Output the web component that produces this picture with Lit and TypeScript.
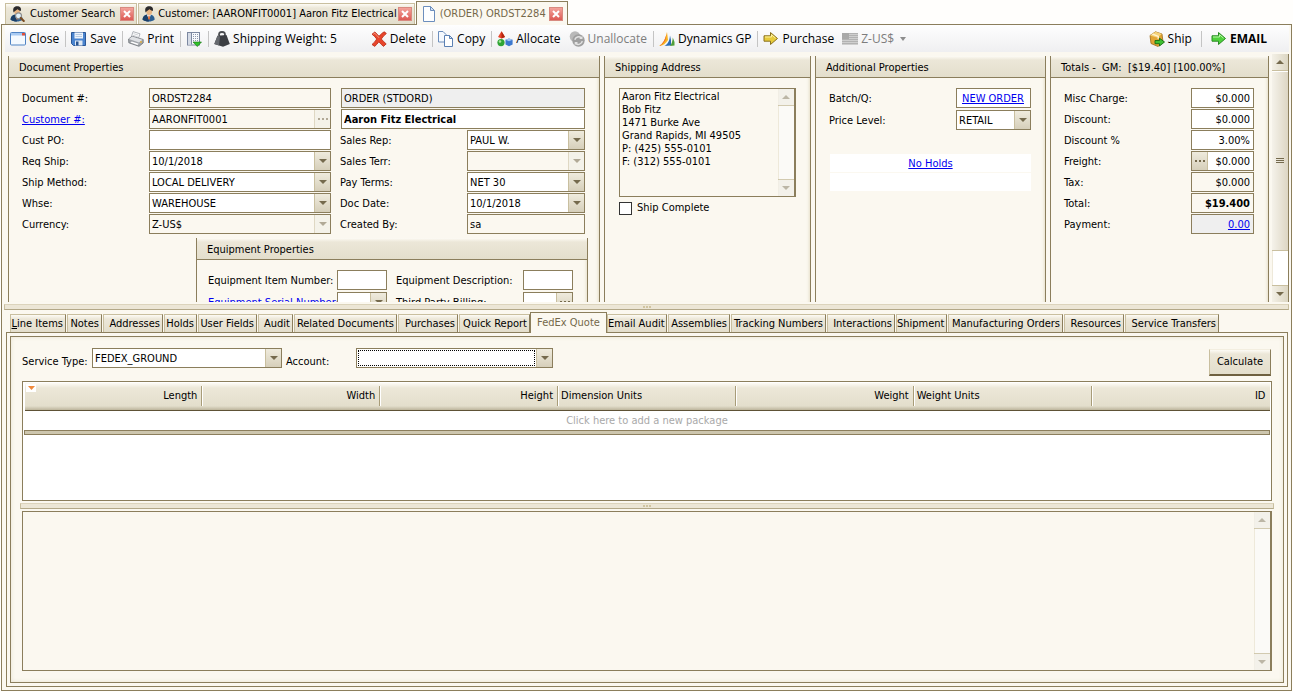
import { LitElement, html, css, svg, nothing, TemplateResult } from "lit";
import { customElement, state } from "lit/decorators.js";
import { classMap } from "lit/directives/class-map.js";
import { styleMap } from "lit/directives/style-map.js";

const icon = (body: TemplateResult) =>
  html`<svg class="icon" viewBox="0 0 16 16" width="16" height="16" aria-hidden="true">${body}</svg>`;

const person = svg`
  <path d="M1.500 13.500c.3-3 2-4.500 5-5h2.500c3 .6 4.500 2 4.700 5-3 2.800-9 2.800-12.200 0z" fill="#2c5f92"/>
  <path d="M1.500 13.500c.3-3 2-4.500 5-5l1.500 7c-2.500 0-4.800-.6-6.500-2z" fill="#1d4068"/>
  <path d="M5.800 8.600l2.200 5 2-5z" fill="#fff"/>
  <path d="M7.500 9.600h1l.6 2.800-1 1.600-1-1.600z" fill="#d9622b"/>
  <ellipse cx="8.200" cy="5" rx="3" ry="3.900" fill="#e9b583"/>
  <path d="M4.600 6.500C3.400 2.400 5 .3 8 .3c3.200 0 4.700 1.700 3.800 4.700-1.300-.2-2.400-1-3.200-1.800-1 1-2.400 1-4 3.300z" fill="#2b2a2c"/>`;

const icons: Record<string, TemplateResult> = {
  person: icon(person),
  search: icon(svg`${person}
    <circle cx="9.500" cy="9.800" r="3" fill="#e2f1fa" stroke="#8c8c8c" stroke-width="1.200"/>
    <path d="M11.800 12l3 3" stroke="#7a4c22" stroke-width="2" stroke-linecap="round"/>`),
  page: icon(svg`
    <path d="M2.500.5h7l4 4v11h-11z" fill="#fdfeff" stroke="#6c8ebd"/>
    <path d="M9.500.5v4h4z" fill="#d5e3f5" stroke="#6c8ebd" stroke-linejoin="round"/>`),
  window: icon(svg`
    <rect x=".5" y="1.500" width="15" height="12.500" rx="1" fill="#f4f9fe" stroke="#4f83c4"/>
    <rect x="1" y="2" width="14" height="2.500" fill="#a8caf2"/>
    <rect x="12" y="2" width="3" height="2.500" fill="#e0503a"/>`),
  save: icon(svg`
    <path d="M.5 1.500h14v13H2.500l-2-2z" fill="#4a84cf" stroke="#2a5797"/>
    <rect x="3.500" y="1.500" width="8.500" height="6" fill="#eef4fb"/>
    <path d="M4.500 3.500h6.500M4.500 5.500h6.500" stroke="#b7cbe4"/>
    <rect x="4" y="9.500" width="7.500" height="5" fill="#dfe8f3"/>
    <rect x="5" y="10.500" width="2.500" height="4" fill="#27528f"/>`),
  print: icon(svg`
    <path d="M3.200 6.500L5 .6l7 2.200-1.700 5z" fill="#fff" stroke="#9aa0a6" stroke-width=".8"/>
    <path d="M5.500 2.600l4.800 1.500M5 4.300l4.800 1.500" stroke="#c3c7cb" stroke-width=".8"/>
    <path d="M.6 8L4 5.200l11.200 3.300v3.500L11 15.300.8 11.800z" fill="#a0a4a9" stroke="#6f7478" stroke-width=".8"/>
    <path d="M1 8L4 5.600l10.600 3.100L11 11.400z" fill="#dfe1e4"/>
    <path d="M2.500 11.500l7 2.400 1.200-1.100-7-2.300z" fill="#fff"/>
    <circle cx="13" cy="11" r=".9" fill="#e7b23a"/>`),
  grid: icon(svg`
    <rect x="1.500" y="1.500" width="12" height="12.500" fill="#f7f9fc" stroke="#7c88a0"/>
    <rect x="2" y="2" width="3.500" height="11.500" fill="#d5dbe6"/>
    <path d="M5.500 1.500v12" stroke="#7c88a0"/>
    <path d="M7 3.500h6M7 5.500h6M7 7.500h6M7 9.500h6" stroke="#8d97ab" stroke-dasharray="1 1"/>
    <path d="M7 11h8.500l-4.200 4.500z" fill="#2fc02a" stroke="#147010" stroke-width=".6"/>`),
  weight: icon(svg`
    <path d="M5.500 5.500C4 2 6 1 8 1s4 1 2.500 4.500" fill="none" stroke="#4a4c50" stroke-width="1.800"/>
    <path d="M3.500 4.800L12.500 4l3.300 9L9 15.800.3 13z" fill="#3c3e43"/>
    <path d="M3.500 4.800l2.500.6-1 9L.3 13z" fill="#66696f"/>`),
  delete: icon(svg`
    <path d="M1 3.200L3.800 1C5.500 2.400 7 4 8 5.300 9.500 3.500 11.500 1.600 13.500.8l1.800 1.800C13.500 4 11.500 6 10.300 8c1.400 1.700 3.300 3.600 4.900 4.900L12.500 15.400c-1.600-1.200-3.200-2.900-4.600-4.600-1.300 1.700-2.800 3.500-4.200 4.600L1 13.500C3 12 4.600 10 5.700 8 4.400 6.100 2.800 4.500 1 3.200z" fill="#e8452c" stroke="#b82a14" stroke-width=".8"/>
    <path d="M2.300 3.300l1.500-1c1.800 1.500 3 3 4.200 4.500" stroke="#f59a82" fill="none"/>`),
  copy: icon(svg`
    <path d="M.5.500h4.500l3 3v7.500h-7.500z" fill="#f5f9fe" stroke="#6c8ebd"/>
    <path d="M6.500 4.500h5l3 3v8h-8z" fill="#fff" stroke="#5b80b3"/>
    <path d="M11.500 4.500v3h3z" fill="#d5e3f5" stroke="#5b80b3"/>`),
  allocate: icon(svg`
    <path d="M4.500.3L8 6 4.500 7.500 1 6z" fill="#e8452c"/><path d="M4.500.3L8 6 4.500 7.500z" fill="#b3250f"/>
    <circle cx="4" cy="11.600" r="3.600" fill="#2fa535"/><circle cx="3" cy="10.500" r="1.300" fill="#a5e39c"/>
    <path d="M8.500 8.800L12 7.500l3.600 1.300v4.700L12 15.200l-3.500-1.700z" fill="#3b78cf"/>
    <path d="M8.500 8.800L12 7.500l3.600 1.300L12 10.300z" fill="#a3c6f2"/>`),
  unallocate: icon(svg`
    <circle cx="6" cy="5.500" r="5.300" fill="#b9b9b9"/><circle cx="9.500" cy="9.500" r="6.200" fill="#9f9f9f"/>
    <path d="M5.800 8.800a4 4 0 0 1 6.500-2M13.300 10.200a4 4 0 0 1-6.500 2.200" fill="none" stroke="#e2e2e2" stroke-width="1.500"/>
    <path d="M13.500 4.800V8h-3.300zM5.700 14.200V11H9z" fill="#e2e2e2"/>`),
  dynamics: icon(svg`
    <path d="M0 15c4-2 6.500-7 8-14l1 8c-2 3.500-5 5.600-9 6z" fill="#f9b61f"/>
    <path d="M0 15c4-2 6.500-7 8-14L6.500 9C5 12 3 14 0 15z" fill="#ee6a2a"/>
    <path d="M5.500 15c3.500-2 5-5 5.500-10.500L12 9v5.500z" fill="#2b6cb5"/>
    <path d="M11 15c1.800-2 2.500-5 2.800-8.500L15.500 11v3.500z" fill="#4f9e3a"/>`),
  yellow: icon(svg`
    <path d="M1 4.800h6.500V1.500L14.500 7.500l-7 6v-3.300H1z" fill="#e7cb3a" stroke="#8a7120"/>
    <path d="M2 6h6.500V3.700l4 3.500" fill="none" stroke="#fbf0a0"/>`),
  green: icon(svg`
    <path d="M1 4.800h6.500V1.500L14.500 7.500l-7 6v-3.300H1z" fill="#4fd23c" stroke="#2a8a24"/>
    <path d="M2 6h6.500V3.700l4 3.500" fill="none" stroke="#b6f3a6"/>`),
  flag: icon(svg`
    <rect x="0" y="2" width="16" height="12" fill="#cfcfcf"/>
    <path d="M0 2.500h16M0 4.500h16M0 6.500h16M0 8.500h16M0 10.500h16M0 12.500h16" stroke="#b2b2b2"/>
    <rect x="0" y="2" width="7" height="6" fill="#a8a8a8"/>`),
  ship: icon(svg`
    <path d="M1 4.500L6.500.8 13 3l1 8-5 4.500-7-3z" fill="#e2a535" stroke="#9a6a1a" stroke-width=".8"/>
    <path d="M1 4.500L6.500.8 13 3 8 6.500z" fill="#f6d37a"/>
    <path d="M4 2.600l6 2.300v2.500l-1.500.6V5.800L2.500 3.600z" fill="#fff3cf"/>
    <path d="M6 9.500h4.500V7.200L15.500 11l-5 4v-2.300H6z" fill="#3fc032" stroke="#156b10" stroke-width=".9"/>`),
};

interface Tool { id: string; text?: string; sep?: boolean; off?: boolean; menu?: boolean; strong?: boolean }
const leftTools: Tool[] = [
  { id: "window", text: "Close", sep: true },
  { id: "save", text: "Save", sep: true },
  { id: "print", text: "Print", sep: true },
  { id: "grid", sep: true },
  { id: "weight", text: "Shipping Weight: 5" },
];
const midTools: Tool[] = [
  { id: "delete", text: "Delete", sep: true },
  { id: "copy", text: "Copy", sep: true },
  { id: "allocate", text: "Allocate" },
  { id: "unallocate", text: "Unallocate", sep: true, off: true },
  { id: "dynamics", text: "Dynamics GP", sep: true },
  { id: "yellow", text: "Purchase" },
  { id: "flag", text: "Z-US$", off: true, menu: true },
];
const rightTools: Tool[] = [
  { id: "ship", text: "Ship", sep: true },
  { id: "green", text: "EMAIL", strong: true },
];

const pages: [string, number][] = [
  ["Line Items", 56], ["Notes", 35], ["Addresses", 60], ["Holds", 33], ["User Fields", 59],
  ["Audit", 35], ["Related Documents", 103], ["Purchases", 60], ["Quick Report", 71],
  ["FedEx Quote", 77], ["Email Audit", 60], ["Assemblies", 62], ["Tracking Numbers", 95],
  ["Interactions", 68], ["Shipment", 51], ["Manufacturing Orders", 115], ["Resources", 60],
  ["Service Transfers", 94],
];

const columns: [string, boolean][] = [
  ["Length", true], ["Width", true], ["Height", true], ["Dimension Units", false],
  ["Weight", true], ["Weight Units", false], ["ID", true],
];

const totals: [string, string, string][] = [
  ["Misc Charge:", "$0.000", ""], ["Discount:", "$0.000", ""], ["Discount %", "3.00%", ""],
  ["Freight:", "$0.000", "lookup"], ["Tax:", "$0.000", "locked"], ["Total:", "$19.400", "locked strong"],
  ["Payment:", "0.00", "grey link"],
];

@customElement("app-root")
export class AppRoot extends LitElement {
  @state() private page = "FedEx Quote";

  static styles = css`
    :host {
      --line: #8b7e5c;
      --soft: #c9bf9f;
      --cream: #fbf8f0;
      --face: linear-gradient(#fdfbf5, #ece7d8 4px, #e3decc);
      display: flex;
      flex-direction: column;
      height: 100vh;
      overflow: hidden;
      background: #fffefc;
      color: #000;
      font: 11px/14px "DejaVu Sans Condensed", "DejaVu Sans", sans-serif;
    }
    * { box-sizing: border-box; }
    button, input, select, textarea { font: inherit; color: inherit; margin: 0; padding: 0; border: 0; border-radius: 0; background: none; outline: 0; }
    a { color: #0000f0; }
    .icon { display: block; flex: none; }

    .docs { display: flex; align-items: flex-end; height: 24px; padding-left: 5px; flex: none; }
    .doc { display: flex; align-items: center; height: 21px; padding: 0 2px; border: 1px solid var(--soft); border-bottom: 0; background: var(--face); gap: 1px; white-space: nowrap; margin-right: 1px; }
    .doc.first { gap: 5px; padding-left: 3px; }
    .doc.open { height: 24px; gap: 3px; padding: 0 4px; margin: 0 0 -1px; border-color: var(--line); background: var(--cream); color: #75684a; z-index: 1; }
    .shut { width: 14px; height: 14px; display: grid; place-items: center; background: linear-gradient(#f3a39b, #dd5a54); border: 1px solid #d88a80; }

    .frame { flex: 1; min-height: 0; display: flex; flex-direction: column; margin: 0 1px 1px; border: 1px solid var(--line); background: var(--cream); padding: 0 2px 3px; }
    .tools { display: flex; align-items: center; height: 27px; flex: none; margin: 0 0 0 1px; background: linear-gradient(#fefefe, #efeff1); font: 12px/16px "Open Sans", "Noto Sans", sans-serif; }
    .group { display: flex; align-items: center; }
    .tool { display: flex; align-items: center; gap: 3px; padding: 0 3px 0 5px; white-space: nowrap; }
    .tool.split-after { padding-right: 6px; }
    .tool.strong { font-weight: 700; }
    .tool.off { color: #7d7d7d; }
    .sep { width: 1px; height: 16px; background: #c4c4c4; }
    .mid { margin-left: 26px; }
    .right { margin-left: auto; margin-right: 13px; }
    .right .tool { padding: 0 9px; }

    .top { display: flex; flex: none; height: 250px; gap: 3px; overflow: hidden; padding: 2px 0 0 4px; }
    .panels { flex: 1; display: grid; grid-template-columns: 592fr 207fr 231fr 219fr; gap: 4px; padding-top: 2px; min-width: 0; }
    .panel { border: 1px solid var(--line); border-top: 0; border-bottom: 0; min-width: 0; overflow: hidden; box-shadow: inset -3px 0 3px -2px #e6dfc9; }
    .panel > h2 { margin: 0; height: 22px; padding: 5px 10px 2px; font: inherit; background: var(--face); border-bottom: 1px solid var(--line); white-space: nowrap; }
    .panel label, .panel a { padding-top: 1px; }

    .field { display: flex; height: 20px; border: 1px solid var(--line); background: #fff; min-width: 0; }
    .field > input, .field > select { flex: 1; width: 100%; min-width: 0; padding: 1px 3px 0 2px; appearance: none; }
    .field.locked { background: var(--cream); }
    .field.grey { background: #efefef; }
    .field.strong { font-weight: 700; }
    .field.num > input { text-align: right; }
    .field.link > input { color: #0000f0; text-decoration: underline; }
    .field.mids > input { text-align: center; color: #0000f0; text-decoration: underline; }
    .field.focus > select { outline: 1px dotted #000; outline-offset: -1px; margin: 1px; }
    .knob { flex: none; width: 16px; display: grid; place-items: center; background: linear-gradient(#efebdd, #d6cfba); border-left: 1px solid var(--soft); }
    .knob.off { background: #f0eee4; opacity: .55; }
    .knob.lead { border-left: 0; border-right: 1px solid var(--soft); }

    .doc-form { display: grid; grid-template-columns: 127px 182px 136px 118px; grid-auto-rows: 20px; row-gap: 1px; padding: 10px 0 0 13px; align-items: center; }
    .doc-form > .second { padding-left: 9px; }
    .doc-form > .wide { grid-column: 3 / 5; margin-left: 10px; }
    .equipment { width: 392px; margin: 4px 0 0 187px; height: 80px; }
    .equip-form { display: grid; grid-template-columns: 129px 50px 136px 50px; grid-auto-rows: 20px; row-gap: 2px; padding: 10px 0 0 11px; align-items: center; white-space: nowrap; }
    .equip-form .second { padding-left: 9px; }

    .ship-form { padding: 10px 14px; display: grid; gap: 4px; }
    .memo { display: flex; border: 1px solid var(--line); height: 109px; background: var(--cream); min-width: 0; }
    .memo > textarea { flex: 1; min-width: 0; resize: none; overflow: hidden; line-height: 13px; padding: 1px 2px; white-space: pre; }
    .panel .check { display: flex; align-items: center; gap: 5px; padding: 0; }
    .check input { appearance: none; width: 13px; height: 13px; border: 1px solid #333; background: #fff; }

    .add-form { display: grid; grid-template-columns: 1fr 75px; grid-auto-rows: 20px; row-gap: 2px; padding: 10px 14px 0 13px; align-items: center; }
    .holds { margin: 24px 14px 0; display: grid; gap: 1px; text-align: center; }
    .holds > div { background: #fff; height: 18px; line-height: 19px; }
    .total-form { display: grid; grid-template-columns: 1fr 63px; grid-auto-rows: 20px; row-gap: 1px; padding: 10px 14px 0 13px; align-items: center; }

    .bar { width: 17px; flex: none; display: flex; flex-direction: column; border-right: 1px solid var(--line); background: #fff; box-shadow: inset 1px 0 #eee9da; }
    .bar > button { height: 17px; flex: none; display: grid; place-items: center; background: linear-gradient(90deg, #f3f0e6, #dcd6c3); border-bottom: 1px solid var(--soft); }
    .bar > button:last-child { border: 0; border-top: 1px solid var(--soft); }
    .thumb { height: 180px; background: linear-gradient(90deg, #f5f2ea, #ddd6c4); border-bottom: 1px solid var(--soft); border-top: 1px solid #fff; display: grid; place-items: center; }
    .fill { flex: 1; }
    .bar.off { background: #fbfaf7; }
    .bar.off > button { background: #f2f0e8; opacity: .8; }
    .bar.off svg { opacity: .55; }

    .split { flex: none; height: 6px; border: 1px solid var(--soft); border-top-color: #dcd4bc; border-bottom-color: #b3a888; background: #ece6d6; display: flex; justify-content: center; align-items: center; gap: 1px; margin: 2px 0; }
    .split i { width: 2px; height: 2px; background: #d0c4a0; }

    .pages { display: flex; align-items: flex-end; height: 20px; flex: none; padding-left: 6px; gap: 1px; }
    .page { height: 18px; flex: none; padding: 1px 2px 0 0; text-align: right; white-space: nowrap; border: 1px solid var(--soft); border-bottom: 0; border-right-color: var(--line); background: var(--face); }
    .page.open { height: 21px; margin: 0 -1px -1px; border-color: var(--line); background: var(--cream); color: #75684a; text-align: center; padding: 0; z-index: 1; }
    .page .key { text-decoration: underline; }
    .outer { flex: 1; min-height: 0; display: flex; margin: 0 1px 0 2px; border: 1px solid var(--line); padding: 3px; }
    .inner { flex: 1; min-width: 0; display: flex; flex-direction: column; border: 1px solid var(--line); padding: 11px 9px; box-shadow: inset 0 0 4px #e8e2cf; }
    .quote { display: flex; align-items: flex-start; padding: 0 3px 0 2px; flex: none; height: 33px; }
    .quote label { padding-top: 7px; white-space: nowrap; }
    .quote .field { width: 190px; }
    .quote .account { width: 74px; padding-left: 4px; }
    .quote .field.focus { width: 197px; }
    .service { width: 70px; }
    .calc { margin: 1px 0 0 auto; width: 62px; height: 27px; background: var(--face); border: 1px solid var(--soft); border-top-color: #f3eee0; border-bottom: 2px solid #6e6040; border-right-color: var(--line); }
    .packages { flex: none; height: 120px; margin: 0 2px; border: 1px solid var(--line); background: #fff; padding: 1px; }
    table { width: 100%; table-layout: fixed; border-collapse: collapse; }
    thead tr { background: linear-gradient(#fdfbf5, #ece7d8 5px, #e3decc 23px, #bdb59c); border-bottom: 1px solid #5e5236; }
    th { font-weight: 400; height: 27px; padding: 3px 0 4px; }
    th > div { display: flex; align-items: center; height: 20px; padding: 0 4px 0 3px; border-right: 1px solid #a89c78; box-shadow: 1px 0 #fff; }
    th:last-child > div { border: 0; box-shadow: none; }
    th.num > div { justify-content: flex-end; }
    .mark { margin: -16px auto 0 -2px; }
    .add { height: 20px; text-align: center; color: #a9a9a9; padding: 0; }
    .rule { height: 4px; padding: 0; border: 1px solid var(--line); background: #cdc6ae; }
    .notes { flex: 1; height: auto; min-height: 0; margin: 0 2px; }
  `;

  private down = html`<svg width="8" height="4" viewBox="0 0 8 4" aria-hidden="true"><path d="M0 0h8L4 4z" fill="#756a4d"/></svg>`;
  private up = html`<svg width="8" height="4" viewBox="0 0 8 4" aria-hidden="true"><path d="M0 4h8L4 0z" fill="#756a4d"/></svg>`;
  private dots = html`<svg width="10" height="2" viewBox="0 0 10 2" aria-hidden="true"><path d="M0 0h2v2H0zM4 0h2v2H4zM8 0h2v2H8z" fill="#756a4d"/></svg>`;

  private tool(t: Tool) {
    return html`<button class=${classMap({ tool: true, off: !!t.off, strong: !!t.strong, "split-after": !!t.sep })} ?disabled=${t.off}
        aria-label=${t.text ?? "Layout"}>
        ${icons[t.id]}${t.text ? html`<span>${t.text}</span>` : nothing}
        ${t.menu ? html`<svg width="11" height="4" viewBox="-3 0 11 4"><path d="M0 0h6L3 4z" fill="#8d8d8d"/></svg>` : nothing}
      </button>${t.sep ? html`<span class="sep"></span>` : nothing}`;
  }

  private text(id: string, value: string, kind = "") {
    return html`<div class="field ${kind}"><input id=${id} .value=${value} ?readonly=${kind.includes("locked")} /></div>`;
  }

  private combo(id: string, value: string, kind = "") {
    const off = kind.includes("locked");
    return html`<div class="field ${kind}">
      <select id=${id} aria-disabled=${off}><option>${value}</option></select>
      <span class=${classMap({ knob: true, off })}>${this.down}</span>
    </div>`;
  }

  private date(id: string, value: string) {
    return html`<div class="field"><input id=${id} .value=${value} />
      <button class="knob" aria-label="Open calendar">${this.down}</button></div>`;
  }

  private scrollbar(off: boolean) {
    return html`<div class=${classMap({ bar: true, off })}>
      <button aria-label="Scroll up">${this.up}</button>
      ${off ? nothing : html`<div class="thumb"><svg width="8" height="6" viewBox="0 0 8 6"><path d="M0 .5h8M0 2.500h8M0 4.500h8" stroke="#756a4d"/></svg></div>`}
      <div class="fill"></div>
      <button aria-label="Scroll down">${this.down}</button>
    </div>`;
  }

  private doc(id: string, name: string, kind: string) {
    return html`<div class="doc ${kind}">${icons[id]}<span>${name}</span>
      <button class="shut" aria-label="Close tab"><svg width="8" height="8" viewBox="0 0 8 8"><path d="M1 1l6 6M7 1L1 7" stroke="#fff" stroke-width="2"/></svg></button></div>`;
  }

  private split() {
    return html`<div class="split" role="separator"><i></i><i></i><i></i></div>`;
  }

  render() {
    return html`
      <nav class="docs">
        ${this.doc("search", "Customer Search", "first")}
        ${this.doc("person", "Customer: [AARONFIT0001] Aaron Fitz Electrical", "")}
        ${this.doc("page", "(ORDER) ORDST2284", "open")}
      </nav>
      <main class="frame">
        <div class="tools" role="toolbar">
          <div class="group">${leftTools.map((t) => this.tool(t))}</div>
          <div class="group mid">${midTools.map((t) => this.tool(t))}</div>
          <div class="group right">${rightTools.map((t) => this.tool(t))}</div>
        </div>
        <div class="top">
          <div class="panels">
            <section class="panel">
              <h2>Document Properties</h2>
              <div class="doc-form">
                <label for="docno">Document #:</label>${this.text("docno", "ORDST2284", "locked")}
                <div class="field grey wide"><input aria-label="Document type" .value=${"ORDER (STDORD)"} readonly /></div>
                <a href="#customer">Customer #:</a>
                <div class="field locked"><input aria-label="Customer number" .value=${"AARONFIT0001"} readonly />
                  <button class="knob off" aria-label="Look up customer">${this.dots}</button></div>
                <div class="field strong wide"><input aria-label="Customer name" .value=${"Aaron Fitz Electrical"} /></div>
                <label for="po">Cust PO:</label>${this.text("po", "")}
                <label class="second" for="rep">Sales Rep:</label>${this.combo("rep", "PAUL W.")}
                <label for="req">Req Ship:</label>${this.date("req", "10/1/2018")}
                <label class="second" for="terr">Sales Terr:</label>${this.combo("terr", "", "locked")}
                <label for="method">Ship Method:</label>${this.combo("method", "LOCAL DELIVERY")}
                <label class="second" for="terms">Pay Terms:</label>${this.combo("terms", "NET 30")}
                <label for="whse">Whse:</label>${this.combo("whse", "WAREHOUSE")}
                <label class="second" for="date">Doc Date:</label>${this.date("date", "10/1/2018")}
                <label for="cur">Currency:</label>${this.combo("cur", "Z-US$", "locked")}
                <label class="second" for="by">Created By:</label>${this.text("by", "sa", "locked")}
              </div>
              <section class="panel equipment">
                <h2>Equipment Properties</h2>
                <div class="equip-form">
                  <label for="eqitem">Equipment Item Number:</label>${this.text("eqitem", "")}
                  <label class="second" for="eqdesc">Equipment Description:</label>${this.text("eqdesc", "")}
                  <a href="#serial">Equipment Serial Number:</a>
                  <div class="field"><select aria-label="Equipment serial number"><option></option></select><span class="knob">${this.down}</span></div>
                  <label class="second" for="third">Third Party Billing:</label>
                  <div class="field"><input id="third" /><button class="knob" aria-label="Look up billing">${this.dots}</button></div>
                </div>
              </section>
            </section>
            <section class="panel">
              <h2>Shipping Address</h2>
              <div class="ship-form">
                <div class="memo">
                  <textarea aria-label="Shipping address" readonly .value=${"Aaron Fitz Electrical\nBob Fitz\n1471 Burke Ave\nGrand Rapids, MI 49505\nP: (425) 555-0101\nF: (312) 555-0101"}></textarea>
                  ${this.scrollbar(true)}
                </div>
                <label class="check"><input type="checkbox" />Ship Complete</label>
              </div>
            </section>
            <section class="panel">
              <h2>Additional Properties</h2>
              <div class="add-form">
                <label for="batch">Batch/Q:</label>${this.text("batch", "NEW ORDER", "mids")}
                <label for="price">Price Level:</label>${this.combo("price", "RETAIL")}
              </div>
              <div class="holds"><div><a href="#holds">No Holds</a></div><div></div></div>
            </section>
            <section class="panel">
              <h2>Totals -&nbsp; GM:&nbsp; [$19.40] [100.00%]</h2>
              <div class="total-form">
                ${totals.map(([label, value, kind], i) => html`
                  <label for="total${i}">${label}</label>
                  <div class="field num ${kind}">
                    ${kind === "lookup" ? html`<button class="knob lead" aria-label="Freight details">${this.dots}</button>` : nothing}
                    <input id="total${i}" .value=${value} />
                  </div>`)}
              </div>
            </section>
          </div>
          ${this.scrollbar(false)}
        </div>
        ${this.split()}
        <div class="pages" role="tablist">
          ${pages.map(([name, width], i) => html`<button role="tab"
            class=${classMap({ page: true, open: name === this.page })}
            style=${styleMap({ width: `${width}px` })}
            aria-selected=${name === this.page}
            @click=${() => (this.page = name)}>${i === 0 ? html`<span class="key">L</span>ine Items` : name}</button>`)}
        </div>
        <div class="outer">
          <div class="inner">
            <div class="quote">
              <label class="service" for="service">Service Type:</label>${this.combo("service", "FEDEX_GROUND")}
              <label class="account" for="account">Account:</label>${this.combo("account", "", "focus")}
              <button class="calc">Calculate</button>
            </div>
            <div class="packages">
              <table>
                <thead><tr>${columns.map(([name, num], i) => html`<th class=${num ? "num" : ""}><div>
                  ${i === 0 ? html`<svg class="mark" width="10" height="8" viewBox="0 0 10 8"><rect width="10" height="8" fill="#fff"/><path d="M2 2h7L5.500 6z" fill="#f08a3c"/></svg>` : nothing}${name}</div></th>`)}</tr></thead>
                <tbody>
                  <tr><td class="add" colspan="7">Click here to add a new package</td></tr>
                  <tr><td class="rule" colspan="7"></td></tr>
                </tbody>
              </table>
            </div>
            ${this.split()}
            <div class="memo notes"><textarea aria-label="Quote result" readonly></textarea>${this.scrollbar(true)}</div>
          </div>
        </div>
      </main>`;
  }
}
